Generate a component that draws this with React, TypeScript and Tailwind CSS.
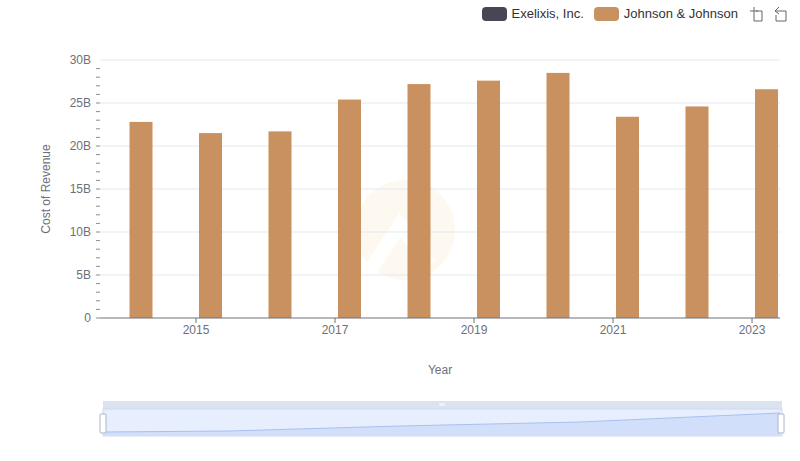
const DATA = [22.8, 21.5, 21.7, 25.4, 27.2, 27.6, 28.5, 23.4, 24.6, 26.6];
const Y0 = 318;
const K = 8.6;

function Chart() {
  const ticks = [0, 5, 10, 15, 20, 25, 30];
  return (
    <svg width="800" height="390" className="block" style={{ fontFamily: "'Liberation Sans', Arial, sans-serif" }}>
      {/* watermark */}
      <g opacity="0.08" fill="#e0a040">
        <circle cx="405" cy="230" r="50" />
      </g>
      <path d="M370 270 L400 225 L430 265" stroke="#fff" strokeWidth="14" fill="none" opacity="0.9" />
      {ticks.map((t) => (
        <g key={t}>
          {t > 0 && <line x1="100" x2="780" y1={Y0 - t * K} y2={Y0 - t * K} stroke="#e5e7ef" />}
          <text x="91" y={Y0 - t * K + 4} textAnchor="end" fontSize="12" fill="#6e7079">
            {t === 0 ? "0" : `${t}B`}
          </text>
        </g>
      ))}
      {Array.from({ length: 30 }, (_, i) => (
        <line key={i} x1="96" x2="100" y1={Y0 - i * K} y2={Y0 - i * K} stroke="#6e7079" strokeWidth="0.8" />
      ))}
      {DATA.map((v, i) => {
        const cx = 141 + i * 69.5;
        return <rect key={i} x={cx - 11.5} y={Y0 - v * K} width="23" height={v * K} fill="#c9915f" />;
      })}
      <line x1="100" x2="780" y1={Y0} y2={Y0} stroke="#6e7079" />
      {[2015, 2017, 2019, 2021, 2023].map((y, i) => (
        <g key={y}>
          <line x1={196 + i * 139} x2={196 + i * 139} y1={Y0} y2={Y0 + 5} stroke="#6e7079" />
          <text x={196 + i * 139} y={Y0 + 16} textAnchor="middle" fontSize="12" fill="#6e7079">{y}</text>
        </g>
      ))}
      <text x="440" y="374" textAnchor="middle" fontSize="12" fill="#6e7079">Year</text>
      <text transform="translate(50 189) rotate(-90)" textAnchor="middle" fontSize="12" fill="#6e7079">Cost of Revenue</text>
    </svg>
  );
}

export default function App() {
  return (
    <div className="relative h-[461px] w-[800px] overflow-hidden bg-white" style={{ fontFamily: "'Liberation Sans', Arial, sans-serif" }}>
      <div className="relative z-10 flex h-[26px] items-center justify-end gap-[10px] pr-[12px] pt-[2px] text-[13px] text-[#333]">
        <div className="flex items-center gap-[5px]">
          <span className="h-[14px] w-[25px] rounded-[4px] bg-[#464655]" />
          <span>Exelixis, Inc.</span>
        </div>
        <div className="flex items-center gap-[5px]">
          <span className="h-[14px] w-[25px] rounded-[4px] bg-[#c9915f]" />
          <span>Johnson &amp; Johnson</span>
        </div>
        <svg width="40" height="20" viewBox="0 0 40 20" fill="none" stroke="#666" strokeWidth="1">
          <path d="M2 7h8M6 3v8M8 7h6v10H6v-6" />
          <path d="M27 7l4-4M27 7l4 3M27 7h11v10H28v-6" />
        </svg>
      </div>
      <div className="-mt-[26px]">
        <Chart />
      </div>
      <svg width="800" height="50" className="absolute left-0 top-[398px]">
        <rect x="103" y="3" width="679" height="8" fill="#dbe2f0" />
        <rect x="103" y="11" width="679" height="27" fill="#e7eefd" stroke="#d2daea" />
        <path d="M103 34 L230 33 L400 28 L580 24 L780 15 L780 38 L103 38Z" fill="#d1dffb" />
        <path d="M103 34 L230 33 L400 28 L580 24 L780 15" fill="none" stroke="#a9c0f0" />
        <rect x="100" y="16" width="6" height="19" rx="1" fill="#fff" stroke="#a8b4cc" />
        <rect x="778" y="16" width="6" height="19" rx="1" fill="#fff" stroke="#a8b4cc" />
        <path d="M440 5v3M442 5v3M444 5v3" stroke="#fff" />
      </svg>
    </div>
  );
}
